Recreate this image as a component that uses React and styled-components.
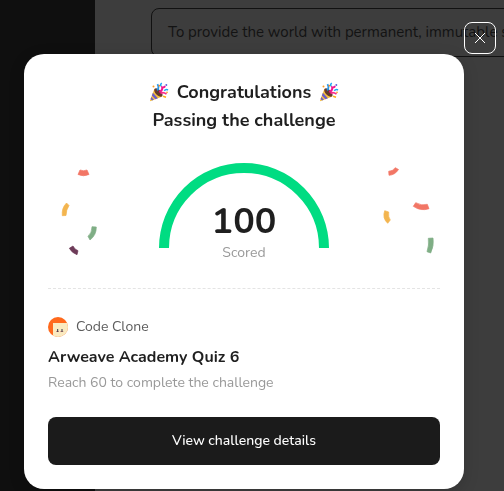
import React from "react";
import styled, { createGlobalStyle } from "styled-components";

const GlobalStyle = createGlobalStyle`
  *, *::before, *::after { box-sizing: border-box; }
  body {
    margin: 0;
    background: #3d3d3d;
    color: #1f1f1f;
    font-family: Nunito, Lato, "Open Sans", sans-serif;
    font-size: 14px;
    line-height: 24px;
  }
  h1, h2, p { margin: 0; }
`;

const Page = styled.div`
  display: flex;
  min-height: 100vh;
  overflow: hidden;
`;

const Sidebar = styled.aside`
  flex: 0 0 95px;
  background: #0f0f0f;
`;

const Main = styled.main`
  flex: 1;
  min-width: 0;
  padding: 8px 0 0 56px;
`;

const Mission = styled.p`
  width: max-content;
  height: 49px;
  padding: 0 16px;
  border: 1px solid #111;
  border-radius: 8px;
  color: #131313;
  font-size: 15px;
  line-height: 47px;
  white-space: nowrap;
`;

const Overlay = styled.div`
  position: fixed;
  inset: 0;
  display: grid;
  grid-template-columns: minmax(0, 1fr) 32px;
  grid-template-rows: 32px auto;
  align-content: start;
  padding: 22px 8px 2px 24px;
  overflow: auto;
`;

const CloseButton = styled.button`
  grid-column: 2;
  display: grid;
  place-items: center;
  width: 32px;
  height: 32px;
  padding: 0;
  border: 1px solid #fff;
  border-radius: 8px;
  background: transparent;
  color: #fff;
  cursor: pointer;
`;

const Dialog = styled.section`
  grid-column: 1;
  padding: 24px;
  border-radius: 20px;
  background: #fff;
  box-shadow: 0 4px 16px rgba(0, 0, 0, 0.15);
`;

const Title = styled.h1`
  font-size: 18px;
  font-weight: 700;
  line-height: 28px;
  text-align: center;
`;

const TitleLine = styled.span`
  display: flex;
  align-items: center;
  justify-content: center;
  gap: 8px;
`;

const Stage = styled.div`
  display: flex;
  justify-content: space-between;
  padding: 29px 6px 25px;
  border-bottom: 1px dashed #e4e4e4;
`;

const Gauge = styled.div`
  display: grid;
  justify-items: center;
  grid-template-rows: 38px 42px 20px;
`;

const Arc = styled.svg`
  grid-area: 1 / 1 / 4 / 2;
`;

const Score = styled.strong`
  grid-area: 2 / 1;
  font-size: 36px;
  font-weight: 700;
  line-height: 42px;
`;

const ScoreLabel = styled.span`
  grid-area: 3 / 1;
  color: #999;
  line-height: 20px;
`;

const Author = styled.div`
  display: flex;
  align-items: center;
  gap: 8px;
  margin-top: 26px;
  color: #5c5c5c;
`;

const QuizName = styled.h2`
  margin-top: 6px;
  font-size: 16px;
  font-weight: 700;
  line-height: 24px;
`;

const Goal = styled.p`
  margin-top: 2px;
  color: #999;
`;

const DetailsButton = styled.button`
  display: block;
  width: 100%;
  height: 48px;
  margin-top: 22px;
  border: 0;
  border-radius: 8px;
  background: #1b1b1b;
  color: #fff;
  font: inherit;
  font-weight: 500;
  cursor: pointer;
`;

const PartyPopper = () => (
  <svg width="20" height="20" viewBox="0 0 20 20" aria-hidden="true">
    <path d="M5.4 6.8 1 18.6Q.9 19.4 1.8 19.1L13.5 14.4Z" fill="#f9c23c" />
    <path d="M3.9 10.8 8.9 16.2 6.4 17.2 2.9 13.4ZM2.3 15 4.9 17.8 3 18.6 1.6 17Z" fill="#6d5fc7" />
    <ellipse cx="9.4" cy="10.5" rx="2.7" ry="5.3" transform="rotate(-45 9.4 10.5)" fill="#653a2f" />
    <path d="M8.2 8.4Q10.6 5.4 8.4 2.2" fill="none" stroke="#2196e8" strokeWidth="1.8" />
    <path d="M10.3 10Q13.8 8.5 13.2 5.4 14.8 6 16.2 4.2" fill="none" stroke="#f0168f" strokeWidth="2" />
    <path d="M11.5 11.5Q14.2 9.5 17.5 12.2" fill="none" stroke="#f72c8a" strokeWidth="1.7" />
    <path d="M12.8 1.2Q10.8 2.6 12.2 4.2M15.2 8.8Q17 6.7 19 8" fill="none" stroke="#16a8f4" strokeWidth="1.5" />
    <path d="M14.1 14.3 17 15.3" stroke="#ffad16" strokeWidth="1.6" />
    <circle cx="4.5" cy="4.5" r="1" fill="#ff9e27" />
    <circle cx="10.3" cy="3.7" r=".9" fill="#ff8a22" />
    <circle cx="17.3" cy="3" r="1" fill="#5e62db" />
    <circle cx="18" cy="10.4" r=".8" fill="#f4a520" />
  </svg>
);

const Scrap = styled.path`
  fill: ${(p) => p.$color};
  stroke: ${(p) => p.$color};
  stroke-width: 0.7;
`;

const LeftConfetti = () => (
  <svg width="52" height="100" viewBox="0 0 52 100" aria-hidden="true">
    <Scrap d="M26 7Q29.5 8.5 33 7L35 11.5Q29.5 14 24 11.5Z" $color="#f27665" />
    <Scrap d="M12.5 40L15 42.5Q12 47 12 52.5L8.3 52.7Q7.5 45 12.5 40Z" $color="#f3b54f" />
    <Scrap d="M38 63.7L42.3 64Q42.5 72 36 77L34 73.3Q38 70 38 63.7Z" $color="#7fae85" />
    <Scrap d="M19 83Q20.5 86.5 24 87.7L23 91.7Q18 90 15.3 85.3Z" $color="#6d3a58" />
  </svg>
);

const RightConfetti = () => (
  <svg width="52" height="100" viewBox="0 0 52 100" aria-hidden="true">
    <Scrap d="M13.3 4.7L16.5 6.5Q13 12 7 12.3L6.7 8.3Q11 8 13.3 4.7Z" $color="#f27665" />
    <Scrap d="M33.7 39.7Q39.5 43 45.3 41.3L47 45.7Q38.5 48.5 31.3 43.3Z" $color="#f27665" />
    <Scrap d="M2.7 47.7L6.7 49Q6 54 8.3 57L5.7 60.3Q0 55 2.7 47.7Z" $color="#f3b54f" />
    <Scrap d="M46.3 75.3L51 75Q52.3 82.5 48.7 90L45 88.7Q47.3 82 46.3 75.3Z" $color="#7fae85" />
  </svg>
);

const Avatar = () => (
  <svg width="20" height="20" viewBox="0 0 20 20" aria-hidden="true">
    <defs>
      <clipPath id="avatar-circle"><circle cx="10" cy="10" r="10" /></clipPath>
    </defs>
    <g clipPath="url(#avatar-circle)">
      <path fill="#ff691c" d="M0 0H20V20H0Z" />
      <path fill="#faeac0" d="M5 6H20V20H5Z" />
      <path d="M8 14.5H11M12.3 14.5H15.3" stroke="#cf8b80" strokeWidth="1" />
      <path d="M9.7 12V15M14 12V15" stroke="#333545" strokeWidth="1" />
    </g>
  </svg>
);

export default function App() {
  return (
    <>
      <GlobalStyle />
      <Page>
        <Sidebar />
        <Main>
          <Mission>To provide the world with permanent, immutable storage</Mission>
        </Main>
      </Page>
      <Overlay>
        <CloseButton type="button" aria-label="Close">
          <svg width="10" height="10" viewBox="0 0 10 10" aria-hidden="true">
            <path d="M0 0 10 10M10 0 0 10" stroke="currentColor" />
          </svg>
        </CloseButton>
        <Dialog role="dialog" aria-modal="true" aria-labelledby="result-title">
          <Title id="result-title">
            <TitleLine><PartyPopper />Congratulations<PartyPopper /></TitleLine>
            <TitleLine>Passing the challenge</TitleLine>
          </Title>
          <Stage>
            <LeftConfetti />
            <Gauge>
              <Arc width="170" height="85" viewBox="0 0 170 85" aria-hidden="true">
                <path d="M5 85A80 80 0 0 1 165 85" fill="none" stroke="#00dc82" strokeWidth="10" />
              </Arc>
              <Score>100</Score>
              <ScoreLabel>Scored</ScoreLabel>
            </Gauge>
            <RightConfetti />
          </Stage>
          <Author><Avatar />Code Clone</Author>
          <QuizName>Arweave Academy Quiz 6</QuizName>
          <Goal>Reach 60 to complete the challenge</Goal>
          <DetailsButton type="button">View challenge details</DetailsButton>
        </Dialog>
      </Overlay>
    </>
  );
}
